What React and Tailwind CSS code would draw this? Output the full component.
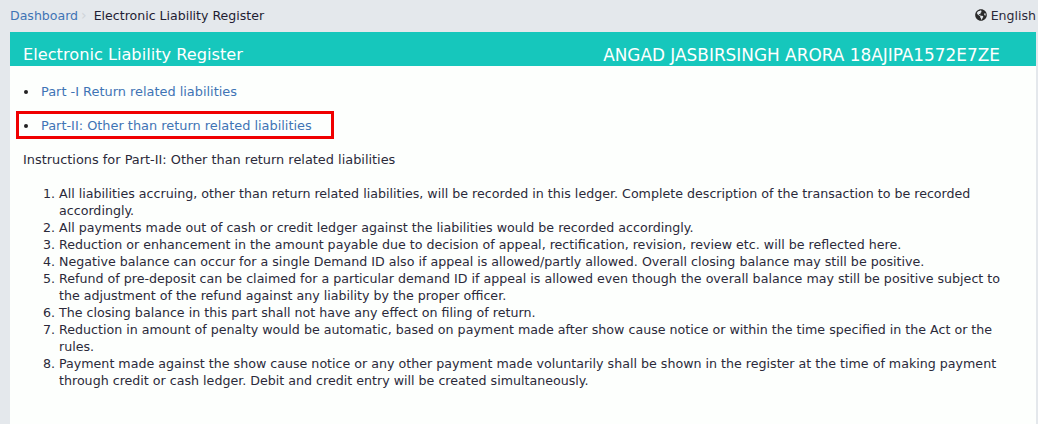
import React from "react";
import { FaGlobeAmericas } from "react-icons/fa";

const items = [
    "All liabilities accruing, other than return related liabilities, will be recorded in this ledger. Complete description of the transaction to be recorded accordingly.",
    "All payments made out of cash or credit ledger against the liabilities would be recorded accordingly.",
    "Reduction or enhancement in the amount payable due to decision of appeal, rectification, revision, review etc. will be reflected here.",
    "Negative balance can occur for a single Demand ID also if appeal is allowed/partly allowed. Overall closing balance may still be positive.",
    "Refund of pre-deposit can be claimed for a particular demand ID if appeal is allowed even though the overall balance may still be positive subject to the adjustment of the refund against any liability by the proper officer.",
    "The closing balance in this part shall not have any effect on filing of return.",
    "Reduction in amount of penalty would be automatic, based on payment made after show cause notice or within the time specified in the Act or the rules.",
    "Payment made against the show cause notice or any other payment made voluntarily shall be shown in the register at the time of making payment through credit or cash ledger. Debit and credit entry will be created simultaneously.",
];

const links = [
    "Part -I Return related liabilities",
    "Part-II: Other than return related liabilities",
];

const App = function () {
    return (
        <div className="h-[424px] overflow-hidden bg-[#e4e8ec] pl-[10px] pr-[2px] text-[12.9px] leading-[17px] text-[#2b2a3a] [font-family:'DejaVu_Sans',Verdana,sans-serif]">
            {/* breadcrumb */}
            <div className="flex h-[32px] items-center justify-between pb-[2px] text-[12.55px]">
                <div className="flex items-center">
                    <a className="text-[#3f74b5]">Dashboard</a>
                    <span className="ml-[3px] mr-[7px] text-[14px] leading-none text-[#cfd4d9]">›</span>
                    <span className="text-[#1f1d33]">Electronic Liability Register</span>
                </div>
                <div className="flex items-center gap-[4px]">
                    <FaGlobeAmericas className="text-[12px] text-[#2a2a2a]" />
                    <span>English</span>
                </div>
            </div>

            <div className="h-[392px] bg-[#fdfffd]">
                {/* title */}
                <div className="flex h-[34px] items-end justify-between bg-[#16c7bc] pl-[13px] pr-[36px] text-[16.9px] leading-[22px] text-white">
                    <span className="text-[16.2px]">Electronic Liability Register</span>
                    <span>ANGAD JASBIRSINGH ARORA 18AJIPA1572E7ZE</span>
                </div>

                <div className="pl-[13px] pr-[18px] pt-[17px]">
                    <ul>
                        {links.map((element, i) => {
                            return (
                                <li className="flex h-[34px] text-[#3f74b5]" key={i}>
                                    <span className="ml-[1px] mr-[14px] mt-[7px] h-[4px] w-[4px] shrink-0 rounded-full bg-[#222]"></span>
                                    <span className="-ml-[1px]">{element}</span>
                                </li>
                            )
                        })}
                    </ul>
                    <p>Instructions for Part-II: Other than return related liabilities</p>
                    <ol className="mt-[17px] list-decimal pl-[36px] text-[12.65px]">
                        {items.map((element, i) => {
                            return <li key={i}>{element}</li>
                        })}
                    </ol>
                </div>
            </div>

            {/* highlight round the second link */}
            <div className="absolute left-[16px] top-[111px] h-[28px] w-[318px] border-[3px] border-[#f00000]"></div>
        </div>
    )
}

export default App;
